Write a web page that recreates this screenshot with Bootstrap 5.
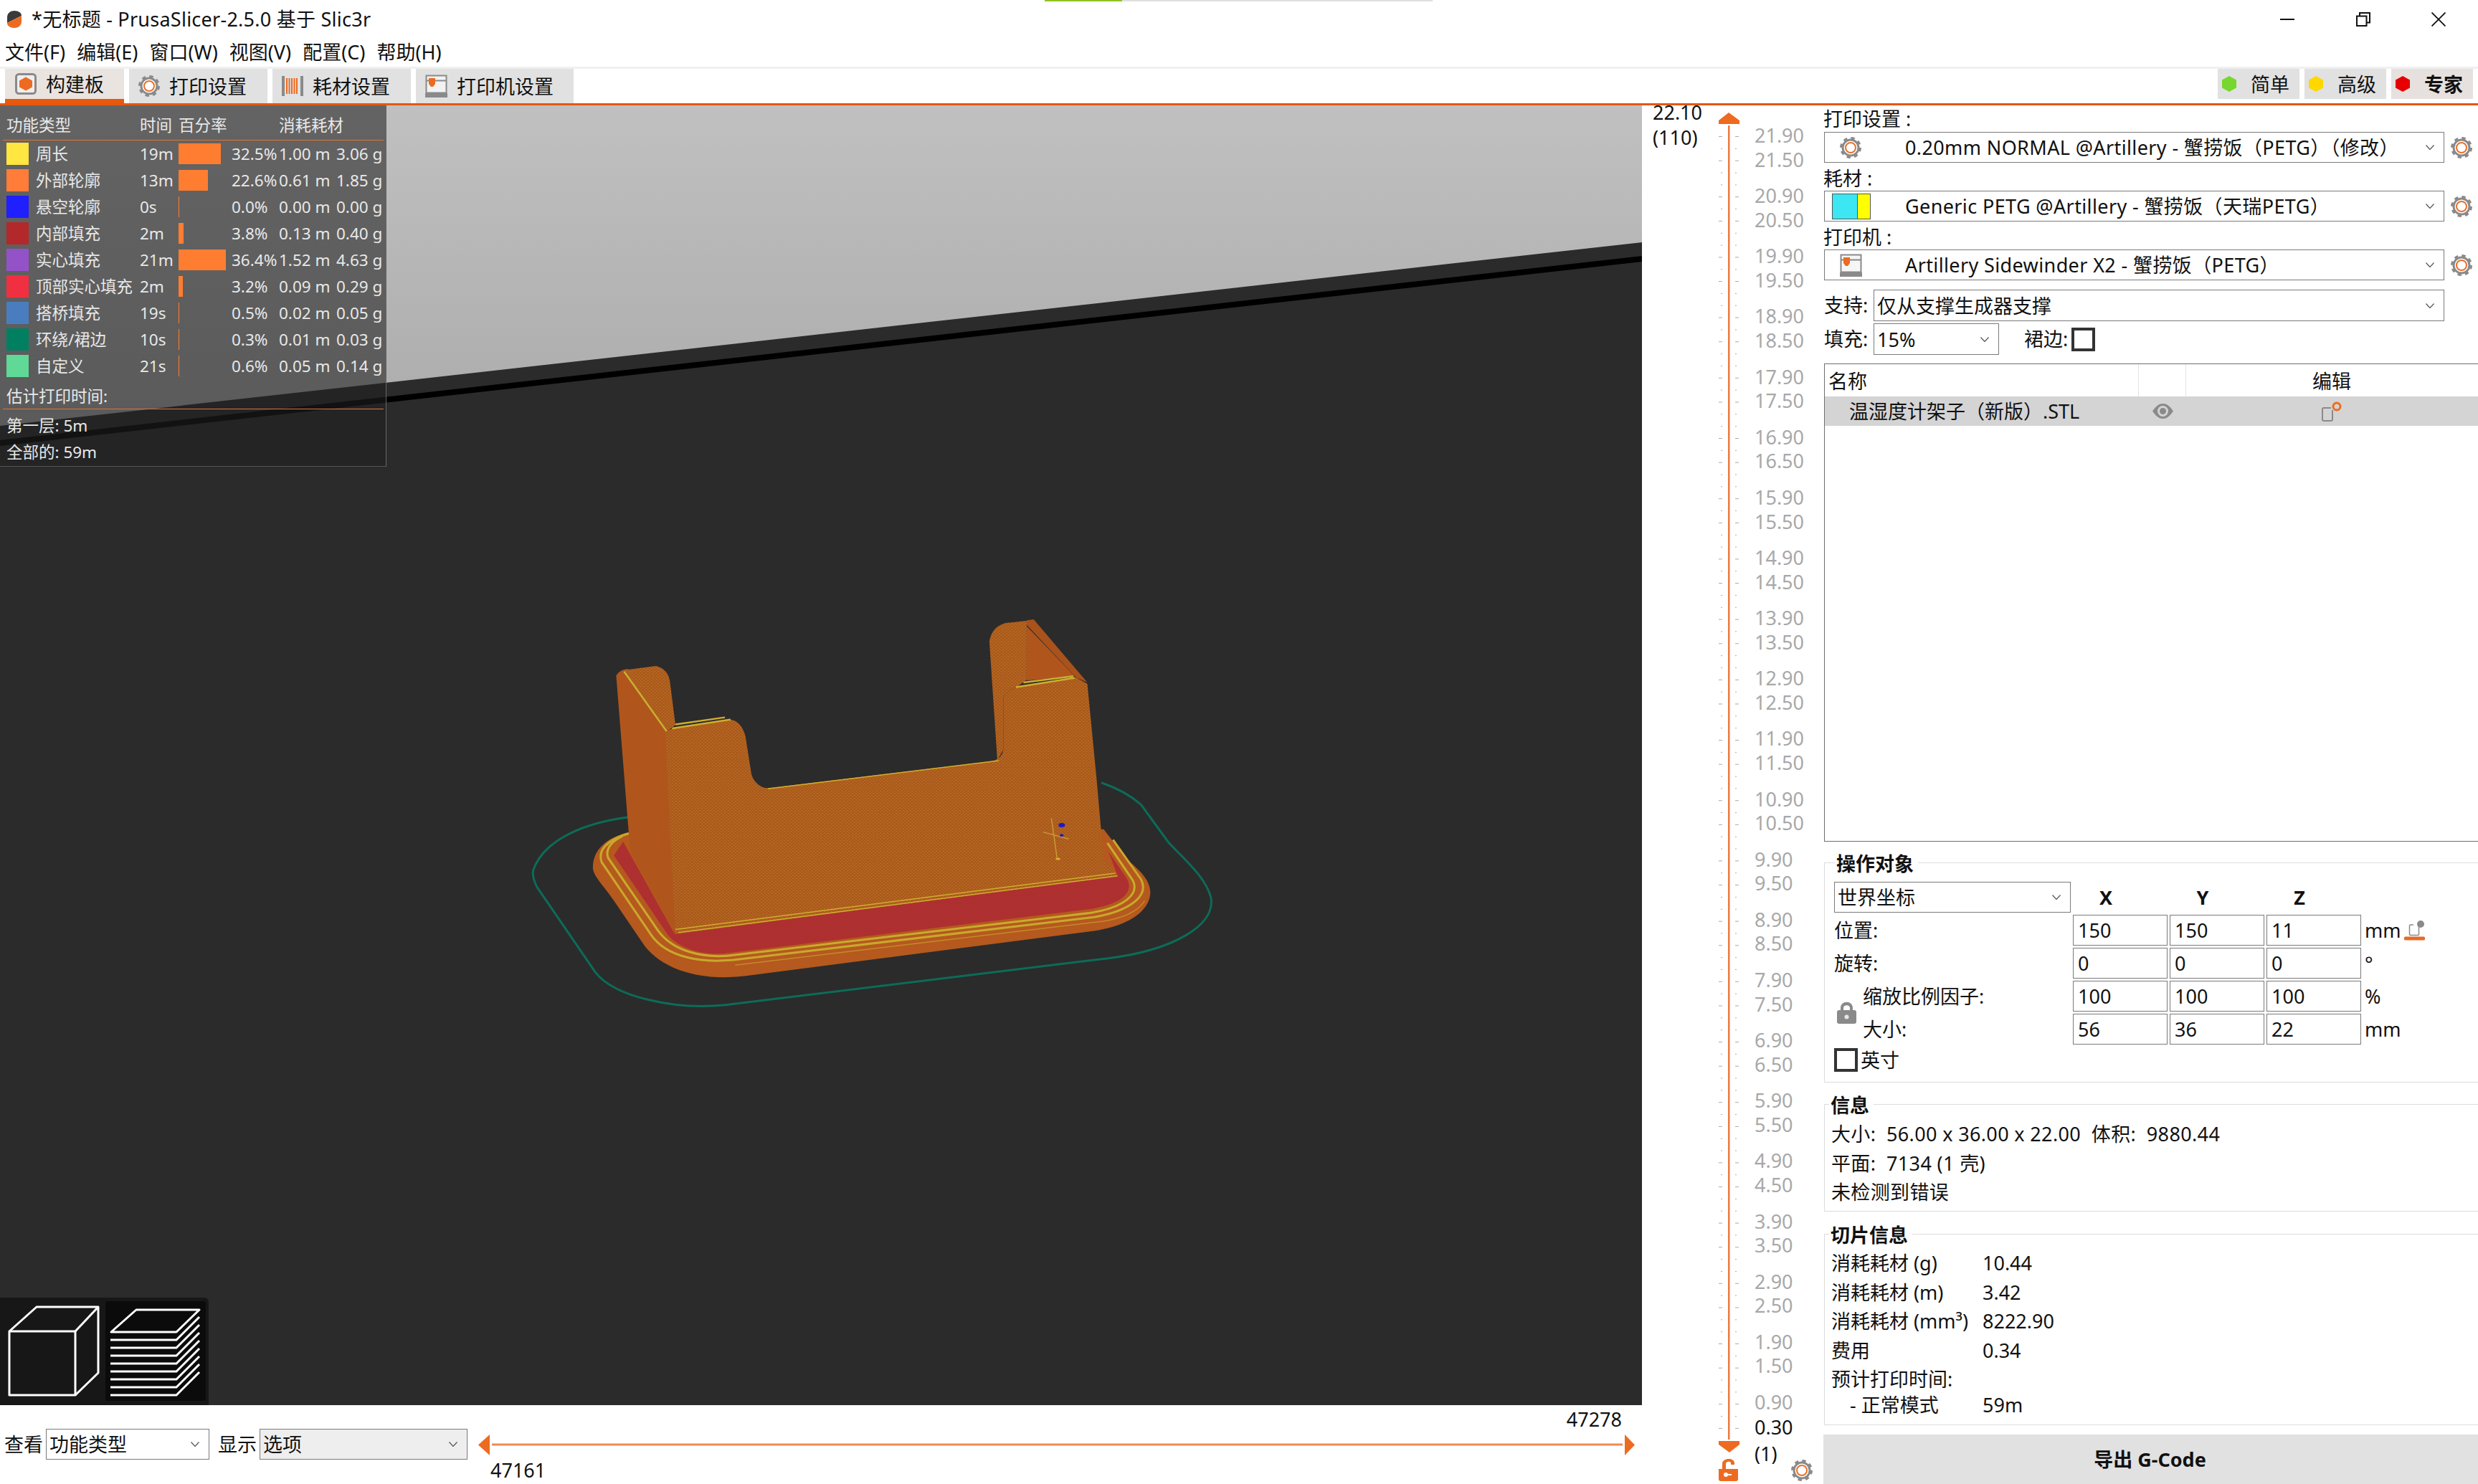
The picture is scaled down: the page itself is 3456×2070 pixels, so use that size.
<!DOCTYPE html>
<html lang="zh-CN">
<head>
  <meta charset="UTF-8" />
  <title>PrusaSlicer</title>
  <link href="https://cdn.jsdelivr.net/npm/bootstrap@5.3.2/dist/css/bootstrap.min.css" rel="stylesheet">
  <style>
    html, body {
      width: 3456px;
      height: 2070px;
      overflow: hidden;
      margin: 0;
      background: #fff;
    }
    body, .form-control {
      font-family: "Noto Sans", "Noto Sans CJK SC", sans-serif;
      font-size: 27px;
      color: #111;
    }
    .ps-app { width: 3456px; height: 2070px; }

    /* title and menu */
    .ps-title { height: 54px; position: relative; }
    .ps-title-text { letter-spacing: .25px; }
    .ps-progress {
      position: absolute; left: 1457px; top: 0;
      width: 541px; height: 2px; background: #e0e0e0;
    }
    .ps-progress-fill { width: 108px; height: 2px; background: #8fc31f; }
    .ps-logo { margin-left: 10px; margin-right: 14px; }
    .ps-winbtn { width: 105.5px; }
    .ps-winbtns { padding-right: 2px; }
    .ps-menu { height: 39px; padding-left: 7px; gap: 16px; line-height: 37px; }
    .ps-sep { height: 3px; background: #f0f0f0; }

    /* tab strip */
    .ps-tabs { height: 48px; padding-left: 7px; padding-right: 7px; }
    .ps-tab {
      height: 48px; background: #e1e1e1; margin-right: 7px;
      padding-left: 13px; gap: 13px; line-height: 1;
    }
    .ps-tab-on { background: #e9e4e0; border-bottom: 6px solid #e8590c; padding-left: 14px; gap: 13px; }
    .ps-w166 { width: 166px; }
    .ps-w193 { width: 193px; }
    .ps-w220 { width: 220px; }
    .ps-mode {
      width: 114px; height: 42px; background: #e1e1e1; margin-left: 7px;
      padding-left: 6px; gap: 20px; line-height: 1;
    }
    .ps-mode-on { background: #e6e1de; font-weight: 700; }
    .ps-rule { height: 3px; background: #e4580f; }

    .ps-main { height: 1923px; }
    .ps-left { width: 2290px; }

    /* 3d view */
    .ps-canvas { height: 1813px; position: relative; background: #2b2b2b; }
    .ps-canvas > svg { display: block; }
    .ps-legend {
      position: absolute; left: 0; top: 0; width: 539px; height: 504px;
      background: rgba(31, 31, 31, .575);
      border-right: 1px solid #666; border-bottom: 1px solid #555;
      color: #e8e8e8; font-size: 22.5px; line-height: 37px;
    }
    .ps-lg-row {
      display: grid; padding-left: 9px; height: 37px;
      grid-template-columns: 41px 145px 54px 74px 66px 80px 1fr;
      align-items: center; white-space: nowrap;
    }
    .ps-lg-row.ps-lg-head { height: 48px; padding-top: 6px; }
    .ps-lg-span2 { grid-column: span 2; }
    .ps-lg-line { height: 1px; background: #d9763a; margin: 0 3px 0 4px; }
    .ps-swatch { width: 31px; height: 31px; }
    .ps-barcell { height: 29px; }
    .ps-bar { height: 29px; background: #ff7d30; min-width: 1px; }
    .ps-lg-text { padding-left: 9px; }
    .ps-lg-est { height: 36px; margin-top: 5px; }
    .ps-lg-one { height: 37px; }

    .ps-views {
      position: absolute; left: 0; bottom: 0; width: 291px; height: 150px;
      background: #171717; border-top-right-radius: 6px;
    }

    /* strip below the view */
    .ps-strip { height: 110px; }
    .ps-strip-side { height: 110px; padding-top: 33px; padding-left: 6px; width: 667px; }
    .ps-strip-label { line-height: 44px; }
    .ps-strip-lab2 { margin-left: 12px; }
    .ps-hs { width: 1613px; }
    .ps-hs-top { height: 40px; line-height: 40px; text-align: right; padding-right: 18px; }
    .ps-hs-svg { height: 30px; display: block; }
    .ps-hs-bot { height: 40px; line-height: 42px; padding-left: 17px; }

    /* combos */
    .ps-combo {
      height: 43px; border: 1px solid #7a7a7a; background: #fff;
      padding-right: 13px; white-space: nowrap; line-height: 41px;
    }
    .ps-combo-grey { background: #eee; }
    .ps-chev { margin-left: auto; flex: none; }
    .ps-combo-ic { width: 112px; padding-left: 21px; flex: none; }
    .ps-swatch-ic { padding-left: 10px; }
    .ps-combo-plain { padding-left: 4px; }
    .ps-preset-text { letter-spacing: .38px; }
    .ps-w228 { width: 228px; }
    .ps-w290 { width: 290px; }

    /* layer slider */
    .ps-layers { width: 253px; position: relative; }
    .ps-layers-svg { position: absolute; left: 0; top: 0; width: 253px; height: 1923px; }
    .ps-top-lab { position: absolute; left: 15px; top: -8px; line-height: 35px; }
    .ps-scale { position: absolute; left: 157px; top: 25px; color: #a8a8a8; white-space: nowrap; }
    .ps-tick-lab { height: 33.66px; line-height: 33.66px; }
    .ps-tick-gap { margin-bottom: 16.83px; }
    .ps-tick-now { color: #111; margin-top: 1px; }
    .ps-tick-sub { color: #111; margin-top: 4px; }

    /* right panel */
    .ps-panel { width: 913px; padding-left: 1px; }
    .ps-w865 { width: 865px; }
    .ps-cap { line-height: 37px; height: 37px; margin-left: -1px; }
    .ps-cap2 { line-height: 39px; height: 39px; padding-top: 2px; margin-left: -1px; }
    .ps-preset-gear { margin-left: 9px; flex: none; }
    .ps-inline { margin-top: 13px; }
    .ps-inline2 { margin-top: 3px; }
    .ps-inline-lab { width: 69px; flex: none; line-height: 44px; }
    .ps-inline .ps-combo, .ps-inline2 .ps-combo { height: 44px; }
    .ps-fill { width: 175px; }
    .ps-brim { margin-left: 35px; line-height: 44px; margin-right: 5px; }
    .ps-check { width: 33px; height: 33px; border: 4px solid #333; flex: none; }
    .ps-tree { margin-top: 12px; height: 667px; border: 1px solid #6e6e6e; border-right: 0; }
    .ps-tree-head { height: 45px; line-height: 48px; }
    .ps-tree-name { width: 438px; padding-left: 5px; border-right: 1px solid #e4e4e4; }
    .ps-tree-eye { width: 66px; border-right: 1px solid #e4e4e4; }
    .ps-tree-edit { width: 406px; text-align: center; }
    .ps-tree-row { height: 41px; background: #d4d4d4; line-height: 41px; }
    .ps-tree-file { width: 438px; padding-left: 34px; white-space: nowrap; }
    .ps-tree-eyeic { width: 66px; padding-left: 19px; }
    .ps-tree-ed { padding-left: 189px; }

    .ps-group { position: relative; border: 1px solid #dcdcdc; border-right: 0; }
    .ps-group-title {
      position: absolute; left: 14px; top: -18px; background: #fff;
      font-weight: 700; line-height: 38px; padding: 0 6px 0 2px;
    }
    .ps-g1 { margin-top: 29px; height: 307px; padding: 26px 0 0 13px; }
    .ps-g2 { margin-top: 30px; height: 150px; padding: 21px 0 0 9px; letter-spacing: .35px; }
    .ps-g2 .ps-group-title, .ps-g3 .ps-group-title { left: 6px; letter-spacing: 0; }
    .ps-g3 { margin-top: 31px; height: 267px; padding: 20px 0 0 9px; }
    .ps-grid {
      display: grid; column-gap: 3px; row-gap: 3px;
      grid-template-columns: 330px 132px 132px 132px 1fr;
      grid-auto-rows: 43px; line-height: 43px;
    }
    .ps-axis { font-weight: 700; text-align: center; padding-right: 40px; }
    .ps-num.form-control {
      height: 43px; border: 1px solid #7a7a7a; border-radius: 0;
      padding: 0 0 0 6px; font-size: 27px; color: #111; line-height: 41px;
    }
    .ps-unit { padding-left: 2px; white-space: nowrap; }
    .ps-scaleblock { grid-row: span 2; }
    .ps-lock { width: 40px; padding-left: 4px; flex: none; }
    .ps-scalelab { height: 46px; line-height: 45px; }
    .ps-inch { margin-top: 5px; line-height: 33px; }
    .ps-info { height: 40.6px; line-height: 40.6px; white-space: nowrap; }
    .ps-info-last { margin-top: -5px; }
    .ps-info-a { width: 211px; flex: none; }
    .ps-indent { padding-left: 26px; }
    .ps-export {
      margin-top: 13px; margin-left: -1px; height: 70px; line-height: 70px;
      background: #e1e1e1; text-align: center; font-weight: 700; padding-right: 2px;
    }
  </style>
</head>
<body>
  <svg width="0" height="0" class="position-absolute">
    <defs>
      <symbol id="gear" viewBox="0 0 30 30">
        <circle cx="15" cy="15" r="13" fill="none" stroke="#8a8a8a" stroke-width="4" stroke-dasharray="5.2 5"/>
        <circle cx="15" cy="15" r="11" fill="#fff" stroke="#8a8a8a" stroke-width="3"/>
        <circle cx="15" cy="15" r="7" fill="#fff" stroke="#e8702a" stroke-width="2"/>
      </symbol>
      <symbol id="chev" viewBox="0 0 12 7">
        <path d="M.5.5 6 6.5 11.5.5" fill="none" stroke="#555" stroke-width="1.2"/>
      </symbol>
    </defs>
  </svg>

  <div class="ps-app d-flex flex-column">
    <!-- title -->
    <div class="ps-title d-flex align-items-center">
      <div class="ps-progress"><div class="ps-progress-fill"></div></div>
      <svg class="ps-logo" width="20" height="24" viewBox="0 0 20 24">
        <path d="M10 0c6 0 10 3 10 7L0 17V9C0 3 5 0 10 0z" fill="#3a3a3a"/>
        <path d="M20 7v8c0 6-5 9-10 9-6 0-10-3-10-7z" fill="#ed6b21"/>
      </svg>
      <span class="ps-title-text">*无标题 - PrusaSlicer-2.5.0 基于 Slic3r</span>
      <div class="ms-auto d-flex ps-winbtns">
        <div class="ps-winbtn d-flex justify-content-center align-items-center">
          <svg width="20" height="2"><rect width="20" height="2" fill="#111"/></svg>
        </div>
        <div class="ps-winbtn d-flex justify-content-center align-items-center">
          <svg width="20" height="20" viewBox="0 0 20 20"><path d="M1 5.500h13.500V19H1zM5 5V1h14v13.500h-4" fill="none" stroke="#111" stroke-width="2"/></svg>
        </div>
        <div class="ps-winbtn d-flex justify-content-center align-items-center">
          <svg width="20" height="20" viewBox="0 0 20 20"><path d="M.5.500l19 19M19.500.500l-19 19" stroke="#111" stroke-width="1.800"/></svg>
        </div>
      </div>
    </div>
    <div class="ps-menu d-flex">
      <span>文件(F)</span><span>编辑(E)</span><span>窗口(W)</span><span>视图(V)</span><span>配置(C)</span><span>帮助(H)</span>
    </div>
    <div class="ps-sep"></div>

    <!-- tabs -->
    <div class="ps-tabs d-flex">
      <div class="ps-tab ps-tab-on ps-w166 d-flex align-items-center">
        <svg width="30" height="30" viewBox="0 0 30 30"><rect x="1.500" y="1.500" width="27" height="27" rx="4" fill="#eee" stroke="#8a8a8a" stroke-width="3"/><path d="M15 5.500l9 5v9l-9 5-9-5v-9z" fill="#ed6b21"/></svg>
        <span>构建板</span>
      </div>
      <div class="ps-tab ps-w193 d-flex align-items-center">
        <svg width="30" height="30"><use href="#gear"/></svg>
        <span>打印设置</span>
      </div>
      <div class="ps-tab ps-w193 d-flex align-items-center">
        <svg width="30" height="30" viewBox="0 0 30 30"><rect y="1" width="4" height="28" fill="#8a8a8a"/><rect x="26" y="1" width="4" height="28" fill="#8a8a8a"/><path d="M6 4h2v22H6zm3.500 0h2v22h-2zM13 4h2v22h-2zm3.500 0h2v22h-2zM20 4h2v22h-2z" fill="#ed6b21"/></svg>
        <span>耗材设置</span>
      </div>
      <div class="ps-tab ps-w220 d-flex align-items-center">
        <svg width="31" height="32" viewBox="0 0 31 32"><path d="M1.500 1.500h28v24h-28zM1.500 8.500h28" fill="#f2f2f2" stroke="#8a8a8a" stroke-width="2"/><rect y="26" width="31" height="6" fill="#8a8a8a"/><path d="M5 5h9v8l-3 4H8l-3-4z" fill="#ed6b21"/></svg>
        <span>打印机设置</span>
      </div>
      <div class="ms-auto d-flex">
        <div class="ps-mode d-flex align-items-center">
          <svg width="20" height="22" viewBox="0 0 20 22"><path d="M10 0l10 5.500v11L10 22 0 16.500v-11z" fill="#76d72e"/></svg><span>简单</span>
        </div>
        <div class="ps-mode d-flex align-items-center">
          <svg width="20" height="22" viewBox="0 0 20 22"><path d="M10 0l10 5.500v11L10 22 0 16.500v-11z" fill="#ffd800"/></svg><span>高级</span>
        </div>
        <div class="ps-mode ps-mode-on d-flex align-items-center">
          <svg width="20" height="22" viewBox="0 0 20 22"><path d="M10 0l10 5.500v11L10 22 0 16.500v-11z" fill="#e60000"/></svg><span>专家</span>
        </div>
      </div>
    </div>
    <div class="ps-rule"></div>

    <div class="ps-main d-flex">
      <div class="ps-left">
        <!-- 3d view -->
        <div class="ps-canvas">
          <svg width="2290" height="1813" viewBox="0 147 2290 1813">
            <defs>
              <linearGradient id="bedgrey" gradientUnits="userSpaceOnUse" x1="0" y1="147" x2="0" y2="594">
                <stop offset="0" stop-color="#c1c0c0"/>
                <stop offset="1" stop-color="#acacac"/>
              </linearGradient>
              <pattern id="dots" patternUnits="userSpaceOnUse" width="7.500" height="11">
                <rect width="7.500" height="11" fill="#a9581b"/>
                <ellipse cx="1.800" cy="2.700" rx="1.500" ry="1.700" fill="#c67e2c"/>
                <ellipse cx="5.500" cy="8.200" rx="1.500" ry="1.700" fill="#c67e2c"/>
              </pattern>
              <pattern id="reddots" patternUnits="userSpaceOnUse" width="6" height="9">
                <rect width="6" height="9" fill="#b03030"/>
                <circle cx="1.500" cy="2" r="1" fill="#982828"/>
                <circle cx="4.500" cy="6.500" r="1" fill="#982828"/>
              </pattern>
            </defs>
            <path d="M0 147H2290V338L0 594z" fill="url(#bedgrey)"/>
            <path d="M0 618 2290 361" stroke="#000" stroke-width="8" fill="none"/>

            <g transform="translate(700 820) scale(.6506 .3827)">
              <!-- skirt -->
              <path d="M275 835C180 855 90 915 67 1030c-2 20 2 40 8 60L200 1400c40 90 170 140 280 120L1300 1350c140-30 230-120 220-220-10-70-50-130-90-200L1370 790c-20-30-50-60-85-80" fill="none" stroke="#0c6c58" stroke-width="3" vector-effect="non-scaling-stroke"/>
              <!-- base -->
              <path d="M275 890C220 910 195 960 195 1020c0 30 25 70 45 120L300 1290c35 95 120 145 220 125L1270 1250c80-20 120-80 120-140 0-50-30-90-50-120L1290 880z" fill="#b5591e"/>
              <path d="M260 925 240 975 350 1250c20 60 80 95 140 80L1265 1170c65-20 90-60 75-110L1300 960l20 90L370 1260z" fill="url(#reddots)"/>
              <path d="M258 905C228 930 222 960 228 985L335 1250c32 75 95 100 155 90L1260 1185c75-20 108-70 92-120L1298 930" fill="none" stroke="#c9ab2d" stroke-width="3" vector-effect="non-scaling-stroke"/>
              <path d="M272 895C222 920 205 960 214 1000L320 1265c32 80 105 103 176 91L1270 1200c80-24 118-80 100-138L1310 918" fill="none" stroke="#c9a82c" stroke-width="3" vector-effect="non-scaling-stroke"/>
              <path d="M500 1375 1290 1215c50-14 75-40 88-75" fill="none" stroke="#c58a2c" stroke-width="1.500" vector-effect="non-scaling-stroke"/>
              <!-- walls -->
              <path d="M245 320c5-15 13-23 25-25L352 525 372 1262 275 960z" fill="#b0561d"/>
              <path d="M262 300l68-15c15 5 28 25 30 55l12 160-20 25z" fill="url(#dots)"/>
              <path d="M262 305 354 525" stroke="#c9b030" stroke-width="2.500" fill="none" vector-effect="non-scaling-stroke"/>
              <path d="M350 525l15-13 125-32c15 5 25 20 32 60l13 140c5 30 20 50 35 50l480-98c15-7 22-17 25-42V400c3-15 15-30 30-40l125-35 25 25 20 350 15 290 30 60L372 1262z" fill="url(#dots)"/>
              <path d="M1045 195c5-45 20-60 35-67l45-8v215l-20 25c-15 10-27 25-30 40v190l-13 38z" fill="url(#dots)"/>
              <path d="M1125 140 1228 322 1125 338z" fill="#b0561d"/>
              <path d="M1125 118l15-3 115 230-25-20-105-190z" fill="#a9521b"/>
              <!-- yellow edges -->
              <g fill="none" stroke="#cfae2f" stroke-width="2.500">
                <path d="M1102 362 1228 328" vector-effect="non-scaling-stroke"/>
                <path d="M1118 345 1225 322" vector-effect="non-scaling-stroke"/>
                <path d="M365 512 490 480" vector-effect="non-scaling-stroke"/>
                <path d="M372 498 478 472" vector-effect="non-scaling-stroke"/>
                <path d="M570 732 1065 630" stroke-width="1.500" vector-effect="non-scaling-stroke"/>
                <path d="M372 1245 1315 1040" stroke-width="1.500" vector-effect="non-scaling-stroke"/>
                <path d="M378 1256 1320 1050" stroke-width="1.500" vector-effect="non-scaling-stroke"/>
              </g>
              <!-- gap fill marks -->
              <path d="M1178 840 1190 985M1160 890 1215 915" stroke="#c79a34" stroke-width="1.500" fill="none" vector-effect="non-scaling-stroke"/>
              <ellipse cx="1200" cy="865" rx="7" ry="8" fill="#1b1bc8"/>
              <ellipse cx="1200" cy="902" rx="4" ry="5" fill="#1b1bc8"/>
              <ellipse cx="1192" cy="988" rx="5" ry="4" fill="#d8b030"/>
            </g>
          </svg>

          <!-- legend -->
          <div class="ps-legend">
            <div class="ps-lg-row ps-lg-head">
              <div class="ps-lg-span2">功能类型</div>
              <div>时间</div>
              <div class="ps-lg-span2">百分率</div>
              <div class="ps-lg-span2">消耗耗材</div>
            </div>
            <div class="ps-lg-line"></div>
            <div id="legend-rows"></div>
            <div class="ps-lg-text ps-lg-est">估计打印时间:</div>
            <div class="ps-lg-line"></div>
            <div class="ps-lg-text ps-lg-one mt-1">第一层: 5m</div>
            <div class="ps-lg-text ps-lg-one">全部的: 59m</div>
          </div>

          <div class="ps-views">
            <svg width="291" height="150" viewBox="0 1810 291 150">
              <rect x="147" y="1815" width="140" height="139" rx="3" fill="#0b0b0b"/>
              <g fill="none" stroke="#fff" stroke-width="3" stroke-linejoin="round">
                <path d="M13 1857h92v89H13z"/>
                <path d="M13 1857 51 1823h86l-32 34M137 1823v92l-32 31"/>
                <path d="M190 1827h88l-32 31h-91z"/>
              </g>
              <g fill="none" stroke="#fff" stroke-width="3" id="layer-lines"></g>
            </svg>
          </div>
        </div>

        <!-- strip -->
        <div class="ps-strip d-flex">
          <div class="ps-strip-side d-flex">
            <span class="ps-strip-label me-1">查看</span>
            <div class="ps-combo ps-combo-plain ps-w228 d-flex align-items-center">功能类型<svg class="ps-chev" width="12" height="7"><use href="#chev"/></svg></div>
            <span class="ps-strip-label ps-strip-lab2 me-1">显示</span>
            <div class="ps-combo ps-combo-plain ps-combo-grey ps-w290 d-flex align-items-center">选项<svg class="ps-chev" width="12" height="7"><use href="#chev"/></svg></div>
          </div>
          <div class="ps-hs">
            <div class="ps-hs-top">47278</div>
            <svg class="ps-hs-svg" width="1613" height="30" viewBox="667 2000 1613 30">
              <path d="M683 2001v29l-16-14.500z" fill="#ed6b21"/>
              <rect x="686" y="2013.500" width="1577" height="3" fill="#ee8a55"/>
              <path d="M2266 2001v29l14-14.500z" fill="#ed6b21"/>
            </svg>
            <div class="ps-hs-bot">47161</div>
          </div>
        </div>
      </div>

      <!-- layer slider -->
      <div class="ps-layers">
        <svg class="ps-layers-svg" viewBox="2290 147 253 1923">
          <g id="ticks" fill="#aaa"></g>
          <rect x="2410" y="175" width="2.500" height="1833" fill="#ec7a3c"/>
          <path d="M2397 168l14-11 15 11v5h-29z" fill="#ed6b21"/>
          <path d="M2397 2010h29v5l-14 11-15-11z" fill="#ed6b21"/>
          <path d="M2397 2049h27v14a3 3 0 0 1-3 3h-21a3 3 0 0 1-3-3zM2402 2049v-7c0-9 17-9 17-1v2h-5v-2c0-3-7-3-7 1v7z" fill="#ed6b21"/>
          <circle cx="2407" cy="2057" r="3" fill="#fff"/><rect x="2407" y="2056" width="8" height="2" fill="#fff"/>
          <use href="#gear" x="2498" y="2036" width="30" height="30"/>
        </svg>
        <div class="ps-top-lab">22.10<br>(110)</div>
        <div class="ps-scale" id="scale"></div>
      </div>

      <!-- settings panel -->
      <div class="ps-panel">
        <div class="ps-cap">打印设置 :</div>
        <div class="d-flex align-items-center">
          <div class="ps-combo ps-w865 d-flex align-items-center">
            <div class="ps-combo-ic d-flex"><svg width="30" height="30"><use href="#gear"/></svg></div>
            <span class="ps-preset-text">0.20mm NORMAL @Artillery - 蟹捞饭（PETG）（修改）</span>
            <svg class="ps-chev" width="12" height="7"><use href="#chev"/></svg>
          </div>
          <svg class="ps-preset-gear" width="30" height="30"><use href="#gear"/></svg>
        </div>
        <div class="ps-cap2">耗材 :</div>
        <div class="d-flex align-items-center">
          <div class="ps-combo ps-w865 d-flex align-items-center">
            <div class="ps-combo-ic ps-swatch-ic d-flex">
              <svg width="54" height="36" viewBox="0 0 54 36"><rect x=".5" y=".5" width="35" height="35" fill="#3ce6f2" stroke="#555"/><rect x="35.500" y=".5" width="18" height="35" fill="#ffff00" stroke="#555"/></svg>
            </div>
            <span class="ps-preset-text">Generic PETG @Artillery - 蟹捞饭（天瑞PETG）</span>
            <svg class="ps-chev" width="12" height="7"><use href="#chev"/></svg>
          </div>
          <svg class="ps-preset-gear" width="30" height="30"><use href="#gear"/></svg>
        </div>
        <div class="ps-cap2">打印机 :</div>
        <div class="d-flex align-items-center">
          <div class="ps-combo ps-w865 d-flex align-items-center">
            <div class="ps-combo-ic d-flex">
              <svg width="31" height="32" viewBox="0 0 31 32"><path d="M1.500 1.500h28v24h-28zM1.500 8.500h28" fill="#f6f6f6" stroke="#8a8a8a" stroke-width="2"/><rect y="26" width="31" height="6" fill="#8a8a8a"/><path d="M5 5h9v8l-3 4H8l-3-4z" fill="#ed6b21"/></svg>
            </div>
            <span class="ps-preset-text">Artillery Sidewinder X2 - 蟹捞饭（PETG）</span>
            <svg class="ps-chev" width="12" height="7"><use href="#chev"/></svg>
          </div>
          <svg class="ps-preset-gear" width="30" height="30"><use href="#gear"/></svg>
        </div>

        <div class="ps-inline ps-w865 d-flex">
          <div class="ps-inline-lab">支持:</div>
          <div class="ps-combo ps-combo-plain flex-grow-1 d-flex align-items-center">仅从支撑生成器支撑<svg class="ps-chev" width="12" height="7"><use href="#chev"/></svg></div>
        </div>
        <div class="ps-inline2 d-flex align-items-center">
          <div class="ps-inline-lab">填充:</div>
          <div class="ps-combo ps-combo-plain ps-fill d-flex align-items-center">15%<svg class="ps-chev" width="12" height="7"><use href="#chev"/></svg></div>
          <div class="ps-brim">裙边:</div>
          <div class="ps-check"></div>
        </div>

        <div class="ps-tree">
          <div class="ps-tree-head d-flex">
            <div class="ps-tree-name">名称</div>
            <div class="ps-tree-eye"></div>
            <div class="ps-tree-edit">编辑</div>
          </div>
          <div class="ps-tree-row d-flex align-items-center">
            <div class="ps-tree-file">温湿度计架子（新版）.STL</div>
            <div class="ps-tree-eyeic d-flex">
              <svg width="29" height="21" viewBox="0 0 29 21"><path d="M0 10.500C5 3 9.500 0 14.500 0S24 3 29 10.500C24 18 19.500 21 14.500 21S5 18 0 10.500z" fill="#8a8a8a"/><circle cx="14.500" cy="10.500" r="7.500" fill="#d4d4d4"/><circle cx="14.500" cy="10.500" r="4.500" fill="#8a8a8a"/></svg>
            </div>
            <div class="ps-tree-ed d-flex">
              <svg width="30" height="28" viewBox="0 0 30 28"><path d="M13 9H3a2 2 0 0 0-2 2v14a2 2 0 0 0 2 2h10a2 2 0 0 0 2-2V12" fill="none" stroke="#8a8a8a" stroke-width="2"/><circle cx="21" cy="7" r="5" fill="none" stroke="#ed6b21" stroke-width="3"/></svg>
            </div>
          </div>
        </div>

        <!-- object manipulation -->
        <div class="ps-group ps-g1">
          <div class="ps-group-title">操作对象</div>
          <div class="ps-grid">
            <div class="ps-combo ps-combo-plain d-flex align-items-center">世界坐标<svg class="ps-chev" width="12" height="7"><use href="#chev"/></svg></div>
            <div class="ps-axis">X</div><div class="ps-axis">Y</div><div class="ps-axis">Z</div><div></div>

            <div>位置:</div>
            <input class="form-control ps-num" value="150"><input class="form-control ps-num" value="150"><input class="form-control ps-num" value="11">
            <div class="ps-unit d-flex align-items-center gap-1">mm
              <svg width="29" height="29" viewBox="0 0 29 29"><path d="M7 7H3a1.500 1.500 0 0 0-1.500 1.500V20A1.500 1.500 0 0 0 3 21.500h10a1.500 1.500 0 0 0 1.500-1.500V9" fill="none" stroke="#8a8a8a" stroke-width="1.500" transform="translate(6)"/><circle cx="23" cy="6" r="5" fill="#8a8a8a"/><rect y="23.500" width="29" height="5" rx="1.500" fill="#e8692a"/></svg>
            </div>

            <div>旋转:</div>
            <input class="form-control ps-num" value="0"><input class="form-control ps-num" value="0"><input class="form-control ps-num" value="0">
            <div class="ps-unit">°</div>

            <div class="ps-scaleblock d-flex align-items-center">
              <div class="ps-lock">
                <svg class="d-block" width="27" height="31" viewBox="0 0 27 31"><path d="M5 13V9c0-11 17-11 17 0v4h-4V9c0-5-9-5-9 0v4z" fill="#8a8a8a"/><rect y="12" width="27" height="19" rx="3" fill="#8a8a8a"/><circle cx="13.500" cy="21.500" r="3" fill="#e6e6e6"/></svg>
              </div>
              <div>
                <div class="ps-scalelab">缩放比例因子:</div>
                <div class="ps-scalelab">大小:</div>
              </div>
            </div>
            <input class="form-control ps-num" value="100"><input class="form-control ps-num" value="100"><input class="form-control ps-num" value="100">
            <div class="ps-unit">%</div>
            <input class="form-control ps-num" value="56"><input class="form-control ps-num" value="36"><input class="form-control ps-num" value="22">
            <div class="ps-unit">mm</div>
          </div>
          <div class="ps-inch d-flex">
            <div class="ps-check"></div><span class="ms-1">英寸</span>
          </div>
        </div>

        <!-- info -->
        <div class="ps-group ps-g2">
          <div class="ps-group-title">信息</div>
          <div class="ps-info">大小:&nbsp; 56.00 x 36.00 x 22.00&nbsp; 体积:&nbsp; 9880.44</div>
          <div class="ps-info">平面:&nbsp; 7134 (1 壳)</div>
          <div class="ps-info">未检测到错误</div>
        </div>

        <!-- slice info -->
        <div class="ps-group ps-g3">
          <div class="ps-group-title">切片信息</div>
          <div class="ps-info d-flex"><div class="ps-info-a">消耗耗材 (g)</div><div>10.44</div></div>
          <div class="ps-info d-flex"><div class="ps-info-a">消耗耗材 (m)</div><div>3.42</div></div>
          <div class="ps-info d-flex"><div class="ps-info-a">消耗耗材 (mm³)</div><div>8222.90</div></div>
          <div class="ps-info d-flex"><div class="ps-info-a">费用</div><div>0.34</div></div>
          <div class="ps-info d-flex"><div class="ps-info-a">预计打印时间:</div></div>
          <div class="ps-info ps-info-last d-flex"><div class="ps-info-a ps-indent">- 正常模式</div><div>59m</div></div>
        </div>

        <div class="ps-export">导出 G-Code</div>
      </div>
    </div>
  </div>

  <script>
    const legend = [
      ['#ffe640', '周长', '19m', 59, '32.5%', '1.00 m', '3.06 g'],
      ['#ff7d38', '外部轮廓', '13m', 41, '22.6%', '0.61 m', '1.85 g'],
      ['#1f1fff', '悬空轮廓', '0s', 1, '0.0%', '0.00 m', '0.00 g'],
      ['#b3282a', '内部填充', '2m', 7, '3.8%', '0.13 m', '0.40 g'],
      ['#9452c8', '实心填充', '21m', 66, '36.4%', '1.52 m', '4.63 g'],
      ['#f03040', '顶部实心填充', '2m', 6, '3.2%', '0.09 m', '0.29 g'],
      ['#4a7dc0', '搭桥填充', '19s', 1, '0.5%', '0.02 m', '0.05 g'],
      ['#008060', '环绕/裙边', '10s', 1, '0.3%', '0.01 m', '0.03 g'],
      ['#60d896', '自定义', '21s', 1, '0.6%', '0.05 m', '0.14 g']
    ];
    document.getElementById('legend-rows').innerHTML = legend.map(r => `
      <div class="ps-lg-row">
        <div class="ps-swatch" style="background:${r[0]}"></div>
        <div>${r[1]}</div>
        <div>${r[2]}</div>
        <div class="ps-barcell"><div class="ps-bar" style="width:${r[3]}px"></div></div>
        <div>${r[4]}</div>
        <div>${r[5]}</div>
        <div>${r[6]}</div>
      </div>`).join('');

    // layer slider labels
    let labels = [];
    for (let i = 21; i >= 1; i--) {
      labels.push(`<div class="ps-tick-lab">${i}.90</div>`);
      labels.push(`<div class="ps-tick-lab ps-tick-gap">${i}.50</div>`);
    }
    labels.push('<div class="ps-tick-lab">0.90</div>');
    labels.push('<div class="ps-tick-lab ps-tick-now">0.30</div>');
    labels.push('<div class="ps-tick-lab ps-tick-sub">(1)</div>');
    document.getElementById('scale').innerHTML = labels.join('');

    // ticks, one per layer
    let ticks = '';
    for (let i = 0; i <= 107; i++) {
      const y = 190 + i * 16.84;
      if (i % 5 === 0 || i % 5 === 2) {
        ticks += `<rect x="2397" y="${y}" width="5" height="1"/><rect x="2420" y="${y}" width="5" height="1"/>`;
      } else {
        ticks += `<rect x="2400" y="${y}" width="2" height="1"/><rect x="2420" y="${y}" width="2" height="1"/>`;
      }
    }
    document.getElementById('ticks').innerHTML = ticks;

    // stacked layers icon
    let lines = '';
    for (let i = 0; i < 8; i++) {
      const y = 1869 + i * 11;
      lines += `<path d="M154 ${y}h92l32-32"/>`;
    }
    document.getElementById('layer-lines').innerHTML = lines;
  </script>
  <script src="https://cdn.jsdelivr.net/npm/bootstrap@5.3.2/dist/js/bootstrap.bundle.min.js"></script>
</body>
</html>
